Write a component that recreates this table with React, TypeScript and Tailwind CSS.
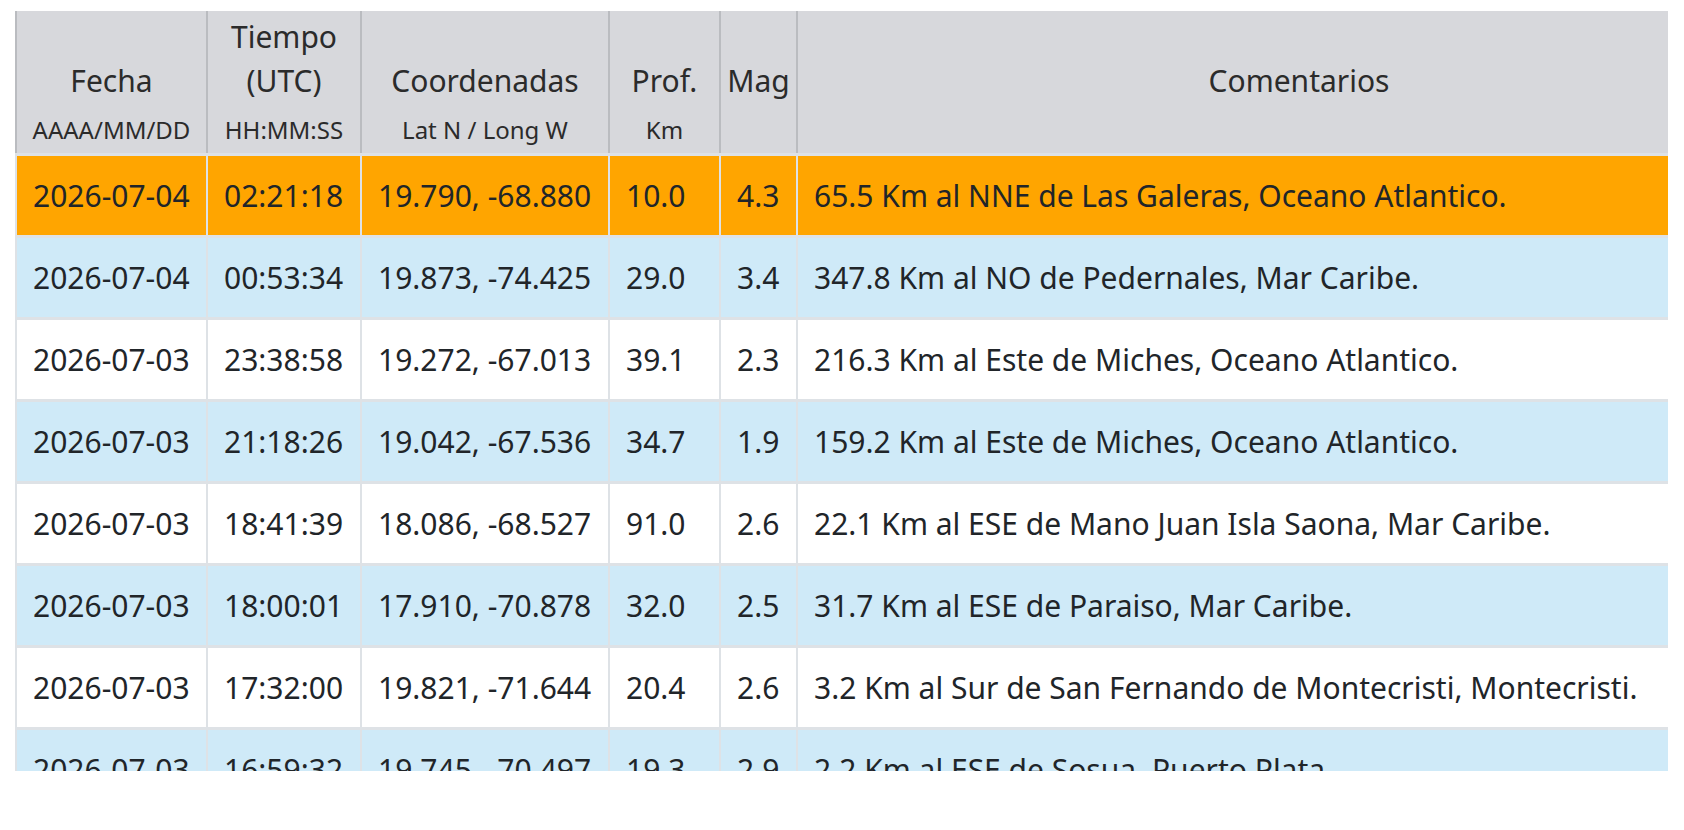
import React from 'react';

const rows = [
  { fecha: '2026-07-04', hora: '02:21:18', coord: '19.790, -68.880', prof: '10.0', mag: '4.3', comentario: '65.5 Km al NNE de Las Galeras, Oceano Atlantico.' },
  { fecha: '2026-07-04', hora: '00:53:34', coord: '19.873, -74.425', prof: '29.0', mag: '3.4', comentario: '347.8 Km al NO de Pedernales, Mar Caribe.' },
  { fecha: '2026-07-03', hora: '23:38:58', coord: '19.272, -67.013', prof: '39.1', mag: '2.3', comentario: '216.3 Km al Este de Miches, Oceano Atlantico.' },
  { fecha: '2026-07-03', hora: '21:18:26', coord: '19.042, -67.536', prof: '34.7', mag: '1.9', comentario: '159.2 Km al Este de Miches, Oceano Atlantico.' },
  { fecha: '2026-07-03', hora: '18:41:39', coord: '18.086, -68.527', prof: '91.0', mag: '2.6', comentario: '22.1 Km al ESE de Mano Juan Isla Saona, Mar Caribe.' },
  { fecha: '2026-07-03', hora: '18:00:01', coord: '17.910, -70.878', prof: '32.0', mag: '2.5', comentario: '31.7 Km al ESE de Paraiso, Mar Caribe.' },
  { fecha: '2026-07-03', hora: '17:32:00', coord: '19.821, -71.644', prof: '20.4', mag: '2.6', comentario: '3.2 Km al Sur de San Fernando de Montecristi, Montecristi.' },
  { fecha: '2026-07-03', hora: '16:59:32', coord: '19.745, -70.497', prof: '19.3', mag: '2.9', comentario: '2.2 Km al ESE de Sosua, Puerto Plata.' },
];

const headers = [
  { lines: ['Fecha'], sub: 'AAAA/MM/DD' },
  { lines: ['Tiempo', '(UTC)'], sub: 'HH:MM:SS' },
  { lines: ['Coordenadas'], sub: 'Lat N / Long W' },
  { lines: ['Prof.'], sub: 'Km' },
  { lines: ['Mag'], sub: '' },
  { lines: ['Comentarios'], sub: '' },
];

const rowBg = (i: number) => {
  if (i === 0) return 'bg-[#ffa500]';
  return i % 2 === 1 ? 'bg-[#cfeaf8]' : 'bg-white';
};

const App = () => {
  return (
    <div className="min-h-screen bg-white pt-[11px] pl-[15px] pr-[16px] text-[#212529] font-['Noto_Sans',sans-serif]">
      <div className="h-[760px] overflow-hidden">
        <table className="w-[1785px] table-fixed border-separate border-spacing-0 text-[30px]">
          <colgroup>
            <col className="w-[191px]" />
            <col className="w-[154px]" />
            <col className="w-[248px]" />
            <col className="w-[111px]" />
            <col className="w-[77px]" />
            <col />
          </colgroup>
          <thead>
            <tr>
              {headers.map((h, idx) => (
                <th
                  key={idx}
                  className="h-[142px] border-l-2 border-[#babcc0] bg-[#d7d8dc] px-1 pt-[4px] pb-[6px] align-bottom text-center font-normal text-[#2b2b2b]"
                >
                  {h.lines.map((l) => (
                    <div key={l} className="h-[44px] leading-[44px] whitespace-nowrap">{l}</div>
                  ))}
                  <div className="h-[44px] leading-[54px] text-[24px] whitespace-nowrap">{h.sub || '\u00a0'}</div>
                </th>
              ))}
            </tr>
          </thead>
          <tbody>
            {rows.map((r, i) => (
              <tr key={i} className={rowBg(i)}>
                {[r.fecha, r.hora, r.coord, r.prof, r.mag, r.comentario].map((v, j) => (
                  <td
                    key={j}
                    className="h-[82px] border-l-2 border-t-[3px] border-[#dee2e6] px-4 text-left align-middle whitespace-nowrap"
                  >
                    {v}
                  </td>
                ))}
              </tr>
            ))}
          </tbody>
        </table>
      </div>
    </div>
  );
};

export default App;
